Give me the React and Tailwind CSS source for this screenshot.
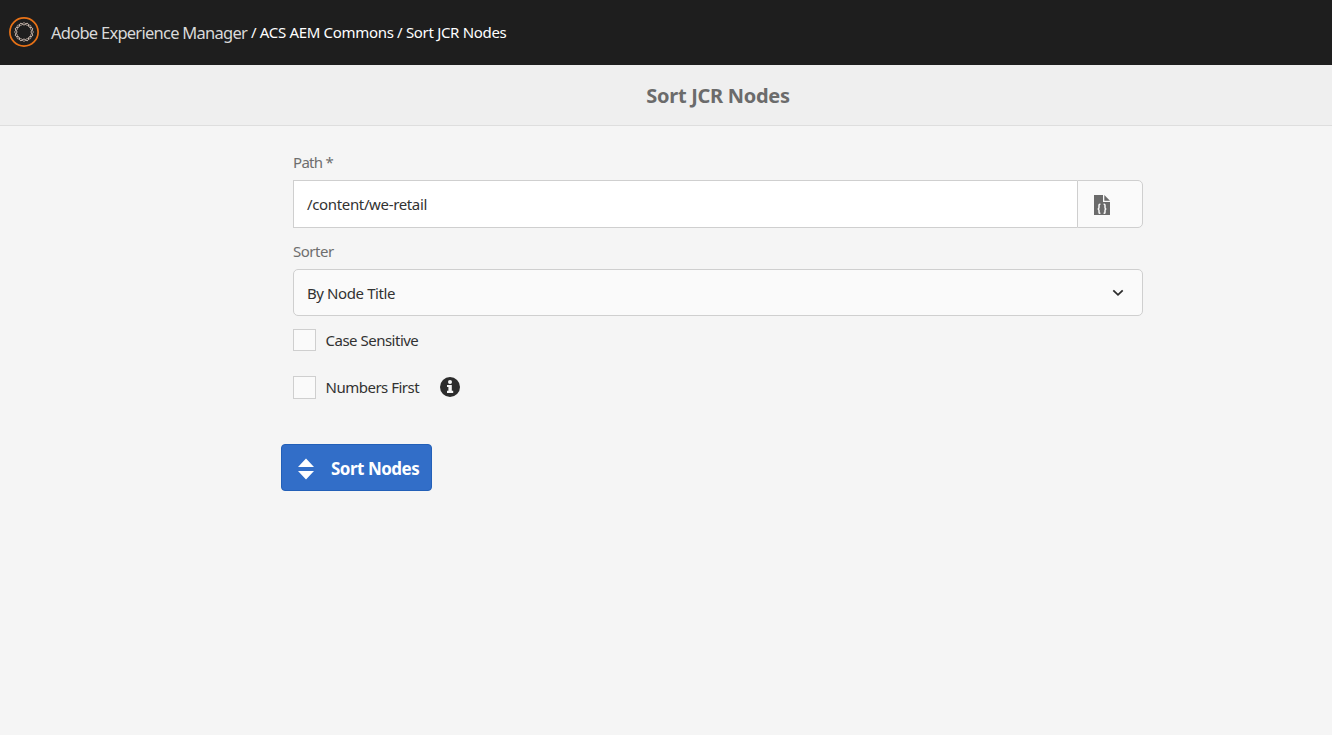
function wave(phase) {
  const points = [];
  for (let i = 0; i < 96; i++) {
    const t = (i / 96) * Math.PI * 2;
    const r = 8.2 + 1.1 * Math.cos(8 * t + phase);
    points.push(`${(15 + r * Math.cos(t)).toFixed(2)},${(15 + r * Math.sin(t)).toFixed(2)}`);
  }
  return points.join(" ");
}

function LogoIcon() {
  return (
    <svg width="30" height="30" viewBox="0 0 30 30" fill="none" className="mb-0.5 shrink-0">
      <circle cx="15" cy="15" r="14.1" stroke="#e87217" strokeWidth="1.7" />
      <polygon points={wave(0)} stroke="#b5a59c" strokeWidth="0.9" />
      <polygon points={wave(Math.PI)} stroke="#e6d3c7" strokeWidth="1" />
    </svg>
  );
}

function FileCodeIcon() {
  return (
    <svg width="16" height="20" viewBox="0 0 16 20" className="mt-0.5 shrink-0">
      <path d="M0 0H9V7H16V20H0Z" fill="#6b6b6b" />
      <path d="M10.3 0L16 5.7H10.3Z" fill="#6b6b6b" />
      <path
        d="M6.4 9.3H5.9Q5 9.3 5 10.3V12.4Q5 13.7 3.8 13.9Q5 14.1 5 15.4V17.2Q5 18.3 5.9 18.3H6.4M9.6 9.3H10.1Q11 9.3 11 10.3V12.4Q11 13.7 12.2 13.9Q11 14.1 11 15.4V17.2Q11 18.3 10.1 18.3H9.6"
        fill="none"
        stroke="#fafafa"
        strokeWidth="1.5"
      />
    </svg>
  );
}

function InfoIcon() {
  return (
    <svg width="20" height="20" viewBox="0 0 20 20" className="mb-px shrink-0">
      <circle cx="10" cy="10" r="10" fill="#2c2c2c" />
      <circle cx="10" cy="4.9" r="2" fill="#f5f5f5" />
      <path d="M7 8H11.8V13.8H13.2V16H7V13.8H8.4V10H7Z" fill="#f5f5f5" />
    </svg>
  );
}

function CheckRow({ label, boxClass, children }) {
  return (
    <div className="flex h-[23px] items-start">
      <span className={`w-[23px] shrink-0 border border-[#cfcfcf] bg-[#fafafa] ${boxClass}`} />
      <span className="ml-[9.5px] w-[114.5px] whitespace-nowrap text-[15px] leading-[23px] tracking-[-0.5px] text-[#323232]">{label}</span>
      {children}
    </div>
  );
}

export default function App() {
  return (
    <div className="h-[735px] bg-[#f5f5f5] font-['Noto_Sans',sans-serif] leading-none">
      <header className="flex h-[65px] items-center bg-[#1e1e1e] pl-[9px] text-white">
        <LogoIcon />
        <div className="ml-3 flex items-center whitespace-pre">
          <span className="w-[200px] pt-0.5 text-[16.5px] tracking-[-0.74px] text-[#d9d9d9]">Adobe Experience Manager</span>
          <span className="text-[15px] tracking-[-0.32px]">/ ACS AEM Commons / Sort JCR Nodes</span>
        </div>
      </header>
      <div className="flex h-[61px] items-center justify-center border-b border-[#dedede] bg-[#efefef] pl-[104px] pt-0.5">
        <h1 className="whitespace-nowrap text-[20px] font-bold tracking-[-0.3px] text-[#6b6b6b]">Sort JCR Nodes</h1>
      </div>
      <main className="ml-[293px] w-[850px] pt-[26px]">
        <label className="block h-[28px] text-[15px] leading-[20px] tracking-[-0.7px] text-[#6e6e6e]">Path *</label>
        <div className="flex h-12">
          <div className="flex w-[784px] items-center border border-r-0 border-[#cfcfcf] bg-white pl-[13px] text-[15px] tracking-[-0.35px] text-[#323232]">/content/we-retail</div>
          <button className="flex w-[66px] items-center rounded-r-[5px] border border-[#cfcfcf] bg-[#fafafa] pl-4">
            <FileCodeIcon />
          </button>
        </div>
        <label className="mt-[13px] block h-[28px] text-[15px] leading-[20px] tracking-[-0.5px] text-[#6e6e6e]">Sorter</label>
        <div className="flex h-[47px] items-center justify-between rounded-[5px] border border-[#cfcfcf] bg-[#fafafa] pl-[13px] pr-[18px] text-[15px] tracking-[-0.4px] text-[#323232]">
          <span className="mt-0.5">By Node Title</span>
          <svg width="12" height="8" viewBox="0 0 12 8" fill="none">
            <path d="M1.3 1.3L6 5.8L10.7 1.3" stroke="#2c2c2c" strokeWidth="1.8" />
          </svg>
        </div>
        <div className="mt-[13px] flex flex-col gap-6">
          <CheckRow label="Case Sensitive" boxClass="h-[22px]" />
          <CheckRow label="Numbers First" boxClass="h-[23px]">
            <span className="pt-px">
              <InfoIcon />
            </span>
          </CheckRow>
        </div>
        <button className="-ml-3 mt-[45px] flex h-[47px] w-[151px] items-center rounded border border-[#2360b8] bg-[#326ec8] pl-4 pt-0.5 text-white">
          <svg width="16" height="22" viewBox="0 0 16 22" fill="currentColor" className="shrink-0">
            <path d="M8 0.5L16 9H0ZM8 21.5L0 13H16Z" />
          </svg>
          <span className="ml-[17px] whitespace-nowrap text-[17px] font-bold tracking-[-0.5px]">Sort Nodes</span>
        </button>
      </main>
    </div>
  );
}
